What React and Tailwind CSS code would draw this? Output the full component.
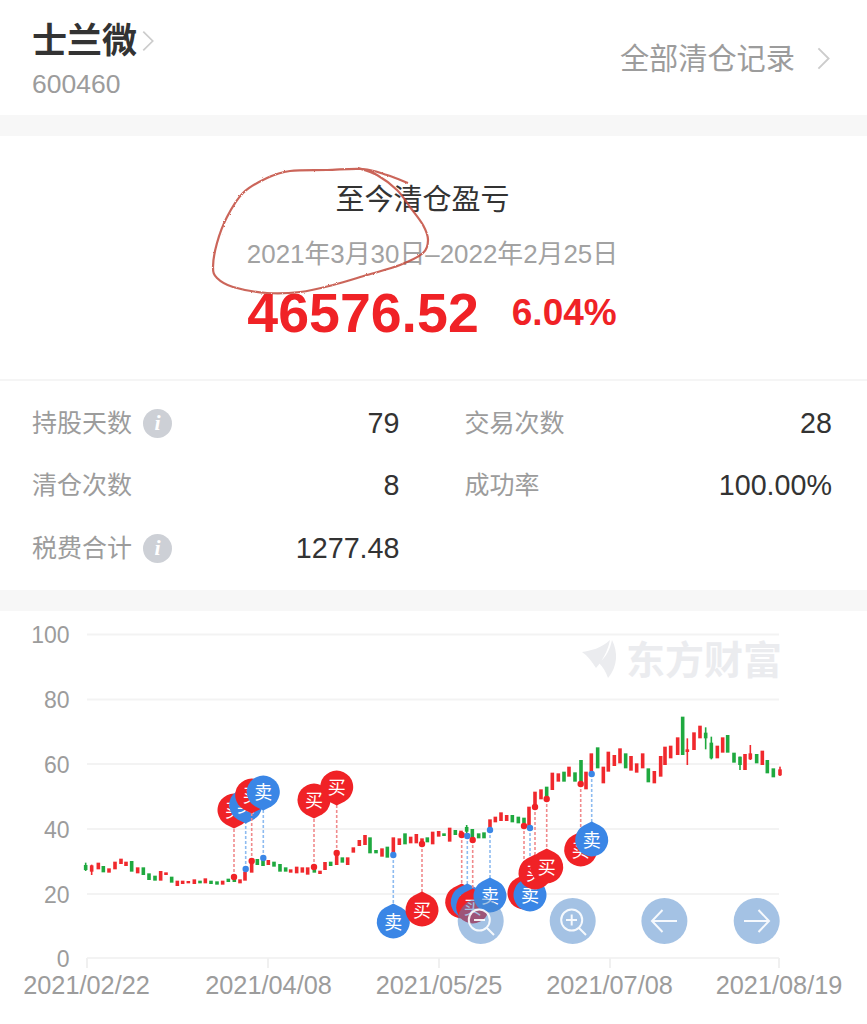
// 清仓详情页: 头部 + 盈亏汇总 + 统计 + K线图

const SANS = "'Liberation Sans','Noto Sans CJK SC',sans-serif";
const RED = "#f02226";
const GREEN = "#1fa93f";
const BLUE = "#3a86e6";

// rows: [x, 颜色, 上, 下, 实体上?, 实体下?], 坐标是 3 倍放大量出来的
function seg(ox, oy, rows) {
  return rows.map(([x, c, t, b, bt, bb]) => ({
    x: ox + x / 3,
    c,
    t: oy + t / 3,
    b: oy + b / 3,
    bt: bt === undefined ? undefined : oy + bt / 3,
    bb: bb === undefined ? undefined : oy + bb / 3,
  }));
}

const r = "r";
const g = "g";

const CANDLES = [
  ...seg(70, 760, [
    [47, g, 308, 333, 315, 330], [65, r, 314, 345, 316, 335], [85, r, 308, 328], [100, g, 318, 337],
    [117, r, 325, 338], [135, r, 305, 328], [153, r, 296, 312], [168, r, 305, 318], [185, g, 303, 335],
    [203, r, 322, 340], [220, g, 322, 345], [237, g, 340, 360], [255, g, 347, 362], [272, r, 333, 362],
    [288, r, 337, 345], [305, g, 350, 368], [322, r, 362, 378], [338, r, 362, 372], [355, r, 363, 370],
    [373, r, 358, 372], [390, g, 362, 370], [406, r, 355, 370], [423, g, 362, 372], [441, g, 364, 374],
    [458, r, 362, 374], [475, g, 356, 366], [493, g, 354, 366], [510, r, 358, 370], [525, r, 335, 362],
    [545, r, 298, 338], [562, g, 297, 315], [579, g, 296, 318], [595, r, 300, 315], [612, g, 305, 320],
    [630, g, 312, 335], [647, g, 322, 335], [662, r, 328, 338], [680, r, 320, 340], [697, r, 322, 338],
    [713, r, 322, 344], [733, g, 325, 338], [750, r, 332, 342], [765, r, 306, 330], [782, g, 305, 318],
    [800, r, 285, 315], [817, g, 292, 308], [833, r, 292, 315], [850, r, 262, 278], [868, r, 240, 258],
    [885, r, 225, 255],
  ]),
  ...seg(295, 805, [
    [225, g, 97, 145], [243, g, 135, 145], [261, r, 130, 155], [277, g, 125, 158], [295, r, 97, 150],
    [313, r, 100, 120], [330, g, 85, 118], [347, r, 95, 115], [364, r, 87, 115], [381, r, 100, 112],
    [397, g, 97, 112], [413, r, 80, 118], [431, r, 78, 95], [447, g, 85, 93], [464, r, 68, 110],
    [481, g, 75, 90], [498, r, 77, 95], [515, g, 60, 90, 66, 80], [532, g, 72, 100], [551, g, 85, 100],
    [567, g, 82, 100], [585, r, 43, 72], [601, r, 35, 52], [618, r, 22, 48], [635, r, 30, 48],
    [652, g, 30, 52], [670, g, 35, 55], [687, g, 38, 55],
  ]),
  ...seg(520, 740, [
    [27, r, 200, 262], [45, r, 155, 205], [63, r, 148, 178], [80, g, 140, 175], [97, r, 98, 150],
    [115, r, 100, 125], [132, g, 95, 125], [147, r, 80, 110], [165, g, 97, 125], [183, g, 60, 135],
    [198, r, 95, 148], [214, r, 40, 95], [233, g, 22, 85], [250, r, 80, 130], [265, r, 35, 95],
    [283, r, 45, 78], [300, r, 25, 70], [317, g, 40, 85], [333, r, 48, 92], [350, r, 70, 98],
  ]),
  ...seg(640, 710, [
    [8, r, 130, 175], [25, g, 175, 217], [43, r, 183, 220], [62, r, 138, 200], [75, r, 110, 165],
    [92, r, 107, 145], [113, r, 82, 135], [128, g, 20, 135], [142, r, 85, 165, 118, 126], [162, r, 67, 120],
    [180, r, 47, 85], [197, g, 52, 118, 68, 85], [214, g, 80, 148, 98, 145], [232, r, 107, 145], [248, r, 82, 128],
    [263, g, 75, 128], [282, g, 128, 158], [300, g, 140, 180, 140, 165], [315, r, 132, 180], [331, r, 105, 150, 130, 148],
    [350, g, 132, 160], [367, r, 122, 165], [382, g, 150, 190], [400, g, 175, 202], [420, r, 170, 198, 178, 196],
  ]),
];

// kind, 气泡中心, 落点; 顺序就是叠放顺序
const MARKERS = [
  ["买", 234, 810, 877],
  ["卖", 245.7, 805, 869],
  ["买", 251.7, 795, 861],
  ["卖", 263.3, 792, 858],
  ["买", 314, 800, 867],
  ["买", 336.7, 787, 853],
  ["卖", 393.3, 922, 855],
  ["买", 422, 910, 844],
  ["买", 461.7, 902, 835],
  ["卖", 467.3, 902, 836],
  ["买", 472.7, 907, 840],
  ["卖", 490, 896, 830],
  ["买", 524, 893, 826],
  ["卖", 530, 895, 828],
  ["买", 535, 873, 807],
  ["买", 546.7, 867, 799],
  ["买", 580.7, 850, 784],
  ["卖", 591.7, 840, 774],
];

const Y_LABELS = [
  ["100", 634.5],
  ["80", 699.5],
  ["60", 764],
  ["40", 829],
  ["20", 894],
  ["0", 958],
];

const X_LABELS = [
  ["2021/02/22", 86.5, 87],
  ["2021/04/08", 268.5, 268],
  ["2021/05/25", 439, 439],
  ["2021/07/08", 609.5, 610],
  ["2021/08/19", 779, 779],
];

const CIRCLE_POINTS = [
  [408, 183], [387, 175], [363, 169], [327, 170], [290, 171], [267, 178], [243, 193], [227, 217],
  [217, 243], [213, 267], [217, 278], [233, 287], [267, 293], [300, 292], [333, 285], [367, 275],
  [400, 265], [423, 253], [428, 240], [423, 225], [410, 207], [397, 190], [377, 175], [358, 168],
];

function smoothPath(points) {
  let d = `M${points[0][0]} ${points[0][1]}`;
  for (let i = 0; i < points.length - 1; i++) {
    const p0 = points[i - 1] || points[i];
    const p1 = points[i];
    const p2 = points[i + 1];
    const p3 = points[i + 2] || p2;
    const c1 = [p1[0] + (p2[0] - p0[0]) / 6, p1[1] + (p2[1] - p0[1]) / 6];
    const c2 = [p2[0] - (p3[0] - p1[0]) / 6, p2[1] - (p3[1] - p1[1]) / 6];
    d += ` C${c1[0]} ${c1[1]} ${c2[0]} ${c2[1]} ${p2[0]} ${p2[1]}`;
  }
  return d;
}

function Chevron({ className }) {
  return (
    <svg viewBox="0 0 14 24" fill="none" stroke="#cccccc" strokeWidth="2" className={className}>
      <path d="M1.5 1 L12.5 12 L1.5 23" />
    </svg>
  );
}

function InfoDot() {
  return (
    <span className="ml-[11px] flex h-[29px] w-[29px] items-center justify-center rounded-full bg-[#cdd0d6] font-['Liberation_Serif',serif] text-[22px] font-bold italic leading-none text-white">
      i
    </span>
  );
}

function Stat({ label, value, info }) {
  return (
    <div className="flex h-[62.5px] items-center justify-between">
      <div className="flex items-center text-[25px] text-[#9c9c9c]">
        {label}
        {info && <InfoDot />}
      </div>
      <div className="text-[28.7px] text-[#333333]">{value}</div>
    </div>
  );
}

function Marker({ kind, cx, cy, end }) {
  const sell = kind === "卖";
  const fill = sell ? BLUE : RED;
  const up = cy > end; // 气泡在下方时尖角朝上
  const s = up ? -1 : 1;
  const shape = `M${cx} ${cy + s * 18.5} L${cx + 8} ${cy + s * 14.5} A16.5 16.5 0 1 ${up ? 1 : 0} ${cx - 8} ${cy + s * 14.5} Z`;
  return (
    <g>
      <line
        x1={cx}
        y1={end}
        x2={cx}
        y2={cy + s * 18}
        stroke={sell ? "#8dbbf0" : "#f08a8c"}
        strokeWidth="1.6"
        strokeDasharray="3 2"
      />
      <circle cx={cx} cy={end} r="3.2" fill={fill} />
      <path d={shape} fill={fill} />
      <text x={cx} y={cy + 6.5} textAnchor="middle" fontSize="18" fill="#ffffff" style={{ fontFamily: SANS }}>
        {kind}
      </text>
    </g>
  );
}

function KChart() {
  return (
    <svg viewBox="0 611 867 413" className="block h-[413px] w-[867px]">
      {/* 网格 */}
      {Y_LABELS.map(([label, y]) => (
        <g key={label}>
          <line x1="87" x2="779" y1={y} y2={y} stroke="#f3f3f3" strokeWidth="2" />
          <text x="69.5" y={y + 8.5} textAnchor="end" fontSize="23" fill="#9c9c9c" style={{ fontFamily: SANS }}>
            {label}
          </text>
        </g>
      ))}
      {X_LABELS.map(([label, cx, tick]) => (
        <g key={label}>
          <line x1={tick} x2={tick} y1="958" y2="968" stroke="#f0f0f0" strokeWidth="2" />
          <text x={cx} y="994" textAnchor="middle" fontSize="25.3" fill="#9c9c9c" style={{ fontFamily: SANS }}>
            {label}
          </text>
        </g>
      ))}

      {/* 水印 */}
      <path
        d="M582 652 C590 651 602 648 610 640 C608 650 603 660 596 668 C592 662 588 656 582 652 Z M612 640 C618 652 618 666 608 678 C606 672 603 667 599 663 C606 657 610 650 612 640 Z"
        fill="#ebecef"
      />
      <text x="626" y="674" fontSize="39" fontWeight="700" fill="#ebecef" style={{ fontFamily: SANS }}>
        东方财富
      </text>

      {/* K线 */}
      {CANDLES.map((k, i) => {
        const color = k.c === "r" ? "#f0292d" : GREEN;
        return (
          <g key={i} fill={color}>
            {k.bt === undefined ? (
              <rect x={k.x - 1.8} y={k.t} width="3.6" height={k.b - k.t} />
            ) : (
              <>
                <rect x={k.x - 0.8} y={k.t} width="1.6" height={k.b - k.t} />
                <rect x={k.x - 1.8} y={k.bt} width="3.6" height={k.bb - k.bt} />
              </>
            )}
          </g>
        );
      })}

      {/* 买卖点 */}
      {MARKERS.map(([kind, cx, cy, end], i) => (
        <Marker key={i} kind={kind} cx={cx} cy={cy} end={end} />
      ))}

      {/* 控制按钮 */}
      <g fill="#4985c9" fillOpacity="0.5">
        <circle cx="480.7" cy="921" r="23" />
        <circle cx="572.7" cy="921" r="23" />
        <circle cx="664.4" cy="921" r="23" />
        <circle cx="756.7" cy="921" r="23" />
      </g>
      <g fill="none" stroke="#ffffff" strokeOpacity="0.9" strokeWidth="2">
        <circle cx="479.3" cy="920" r="10.5" />
        <path d="M474 920 H485 M487 928 L494 935" />
        <circle cx="571.7" cy="920" r="10.5" />
        <path d="M566 920 H577 M571.7 914.5 V925.5 M579 928 L586 935" />
        <path d="M652 921 H677 M662.5 910 L652 921 L662.5 932" />
        <path d="M744 921 H769 M758.5 910 L769 921 L758.5 932" />
      </g>
    </svg>
  );
}

export default function App() {
  return (
    <div
      className="w-[867px] overflow-hidden bg-[#f7f7f7]"
      style={{ fontFamily: SANS }}
    >
      {/* 头部 */}
      <header className="flex h-[115px] justify-between bg-white pl-[32px] pr-[37px]">
        <div className="pt-[19px]">
          <div className="flex items-center">
            <span className="text-[35px] font-bold leading-[44px] text-[#333333]">士兰微</span>
            <Chevron className="ml-[5px] h-[24px] w-[12px]" />
          </div>
          <div className="mt-[7px] text-[26.5px] leading-[28px] text-[#9c9c9c]">600460</div>
        </div>
        <div className="flex items-center pt-[1px]">
          <span className="mt-[3px] text-[29.2px] text-[#9c9c9c]">全部清仓记录</span>
          <Chevron className="ml-[22px] h-[23px] w-[13px]" />
        </div>
      </header>

      {/* 盈亏汇总 */}
      <section className="relative mt-[21px] flex h-[245px] flex-col items-center border-b-2 border-[#f5f5f5] bg-white pt-[44px]">
        <h2 className="mr-[22px] text-[29px] font-normal leading-[40px] text-[#333333]">至今清仓盈亏</h2>
        <p className="mr-[2px] mt-[15px] text-[25.9px] leading-[38px] text-[#a2a2a2]">2021年3月30日–2022年2月25日</p>
        <div className="mr-[3px] mt-[9px] flex items-center gap-[33px] font-bold leading-[62px] text-[#f02226]">
          <span className="text-[55.5px]">46576.52</span>
          <span className="text-[37px]">6.04%</span>
        </div>
        {/* 手写圈注 */}
        <svg viewBox="0 136 867 245" className="pointer-events-none absolute inset-0 h-[245px] w-[867px]">
          <defs>
            <filter id="pencil" x="-5%" y="-5%" width="110%" height="110%">
              <feTurbulence type="fractalNoise" baseFrequency="0.9" numOctaves="2" seed="3" />
              <feDisplacementMap in="SourceGraphic" scale="2" />
            </filter>
          </defs>
          <path
            d={smoothPath(CIRCLE_POINTS)}
            fill="none"
            stroke="#c24a3c"
            strokeWidth="2.2"
            strokeOpacity="0.85"
            filter="url(#pencil)"
          />
        </svg>
      </section>

      {/* 统计 */}
      <section className="grid h-[209px] grid-cols-2 content-start gap-x-[65px] bg-white pl-[32px] pr-[35px] pt-[11px]">
        <Stat label="持股天数" value="79" info />
        <Stat label="交易次数" value="28" />
        <Stat label="清仓次数" value="8" />
        <Stat label="成功率" value="100.00%" />
        <Stat label="税费合计" value="1277.48" info />
      </section>

      {/* K线图 */}
      <section className="mt-[21px] bg-white">
        <KChart />
      </section>
    </div>
  );
}
